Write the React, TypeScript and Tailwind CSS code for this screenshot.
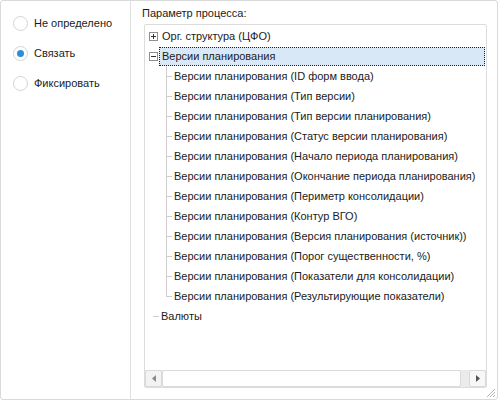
import React from "react";

const children = [
  "Версии планирования (ID форм ввода)",
  "Версии планирования (Тип версии)",
  "Версии планирования (Тип версии планирования)",
  "Версии планирования (Статус версии планирования)",
  "Версии планирования (Начало периода планирования)",
  "Версии планирования (Окончание периода планирования)",
  "Версии планирования (Периметр консолидации)",
  "Версии планирования (Контур ВГО)",
  "Версии планирования (Версия планирования (источник))",
  "Версии планирования (Порог существенности, %)",
  "Версии планирования (Показатели для консолидации)",
  "Версии планирования (Результирующие показатели)",
];

function Radio({ label, checked }: { label: string; checked?: boolean }) {
  return (
    <div className="flex items-center h-[20px]">
      <div className="w-[15px] h-[15px] rounded-full border border-[#d4d4d4] bg-white flex items-center justify-center ml-[12px]">
        {checked && <div className="w-[7px] h-[7px] rounded-full bg-[#2b8fd8]" />}
      </div>
      <span className="ml-[6px] whitespace-nowrap">{label}</span>
    </div>
  );
}

function ExpandBox({ minus }: { minus?: boolean }) {
  return (
    <div className="w-[9px] h-[9px] border border-[#8f8f8f] bg-white relative shrink-0">
      <div className="absolute left-[1px] top-[3px] w-[5px] h-[1px] bg-[#333]" />
      {!minus && <div className="absolute left-[3px] top-[1px] w-[1px] h-[5px] bg-[#333]" />}
    </div>
  );
}

export default function App() {
  return (
    <div
      className="w-[500px] h-[401px] bg-white text-[11px] text-[#1b1b1b]"
      style={{ fontFamily: '"Liberation Sans", Arial, sans-serif' }}
    >
      <div className="w-[498px] h-[400px] border border-[#d9d9d9] rounded-[3px] flex relative">
        <div className="w-[130px] h-full border-r border-[#e0e0e0] flex flex-col gap-[10px] pt-[12px]">
          <Radio label="Не определено" />
          <Radio label="Связать" checked />
          <Radio label="Фиксировать" />
        </div>
        <div className="flex-1 flex flex-col pl-[11px] pr-[10px] pt-[2px] pb-[11px]">
          <div className="h-[21px] flex items-center">Параметр процесса:</div>
          <div className="flex-1 border border-[#dcdcdc] rounded-[2px] flex flex-col ml-[2px]">
            <div className="flex-1 pt-[1px]">
              <div className="h-[20px] flex items-center">
                <div className="w-[4px]" />
                <ExpandBox />
                <span className="ml-[4px] whitespace-nowrap">Орг. структура (ЦФО)</span>
              </div>
              <div className="h-[20px] flex items-center">
                <div className="w-[4px]" />
                <ExpandBox minus />
                <div className="ml-[1px] flex-1 h-[19px] bg-[#d8e8f6] border border-dotted border-[#222] flex items-center pl-[2px] mr-[1px] whitespace-nowrap">
                  Версии планирования
                </div>
              </div>
              {children.map((c, i) => {
                const last = i === children.length - 1;
                return (
                  <div key={c} className="h-[20px] flex items-center">
                    <div className="w-[21px] shrink-0" />
                    <div className="w-[8px] h-full relative shrink-0">
                      <div
                        className={`absolute left-0 top-0 w-[1px] bg-[#cfcfcf] ${last ? "h-[10px]" : "h-[20px]"}`}
                      />
                      <div className="absolute left-0 top-[10px] w-[6px] h-[1px] bg-[#cfcfcf]" />
                    </div>
                    <span className="whitespace-nowrap">{c}</span>
                  </div>
                );
              })}
              <div className="h-[20px] flex items-center">
                <div className="w-[8px]" />
                <div className="w-[6px] h-[1px] bg-[#cfcfcf]" />
                <span className="ml-[2px] whitespace-nowrap">Валюты</span>
              </div>
            </div>
            <div className="h-[17px] flex items-stretch bg-[#ebebeb]">
              <div className="w-[17px] bg-[#f3f3f3] border border-[#dadada] rounded-[2px] flex items-center justify-center">
                <svg width="4" height="7" viewBox="0 0 4 7">
                  <path d="M4 0 L0 3.5 L4 7 Z" fill="#8a8a8a" />
                </svg>
              </div>
              <div className="w-[299px] bg-white border border-[#dadada] rounded-[2px]" />
              <div className="flex-1" />
              <div className="w-[17px] bg-[#f7f7f7] border border-[#dadada] rounded-[2px] flex items-center justify-center">
                <svg width="4" height="7" viewBox="0 0 4 7">
                  <path d="M0 0 L4 3.5 L0 7 Z" fill="#555" />
                </svg>
              </div>
            </div>
          </div>
        </div>
        <svg className="absolute right-[1px] bottom-[1px]" width="10" height="10" viewBox="0 0 10 10">
          <path d="M9 1 L1 9 M9 4 L4 9 M9 7 L7 9" stroke="#b5b5b5" strokeWidth="1" />
        </svg>
      </div>
    </div>
  );
}
